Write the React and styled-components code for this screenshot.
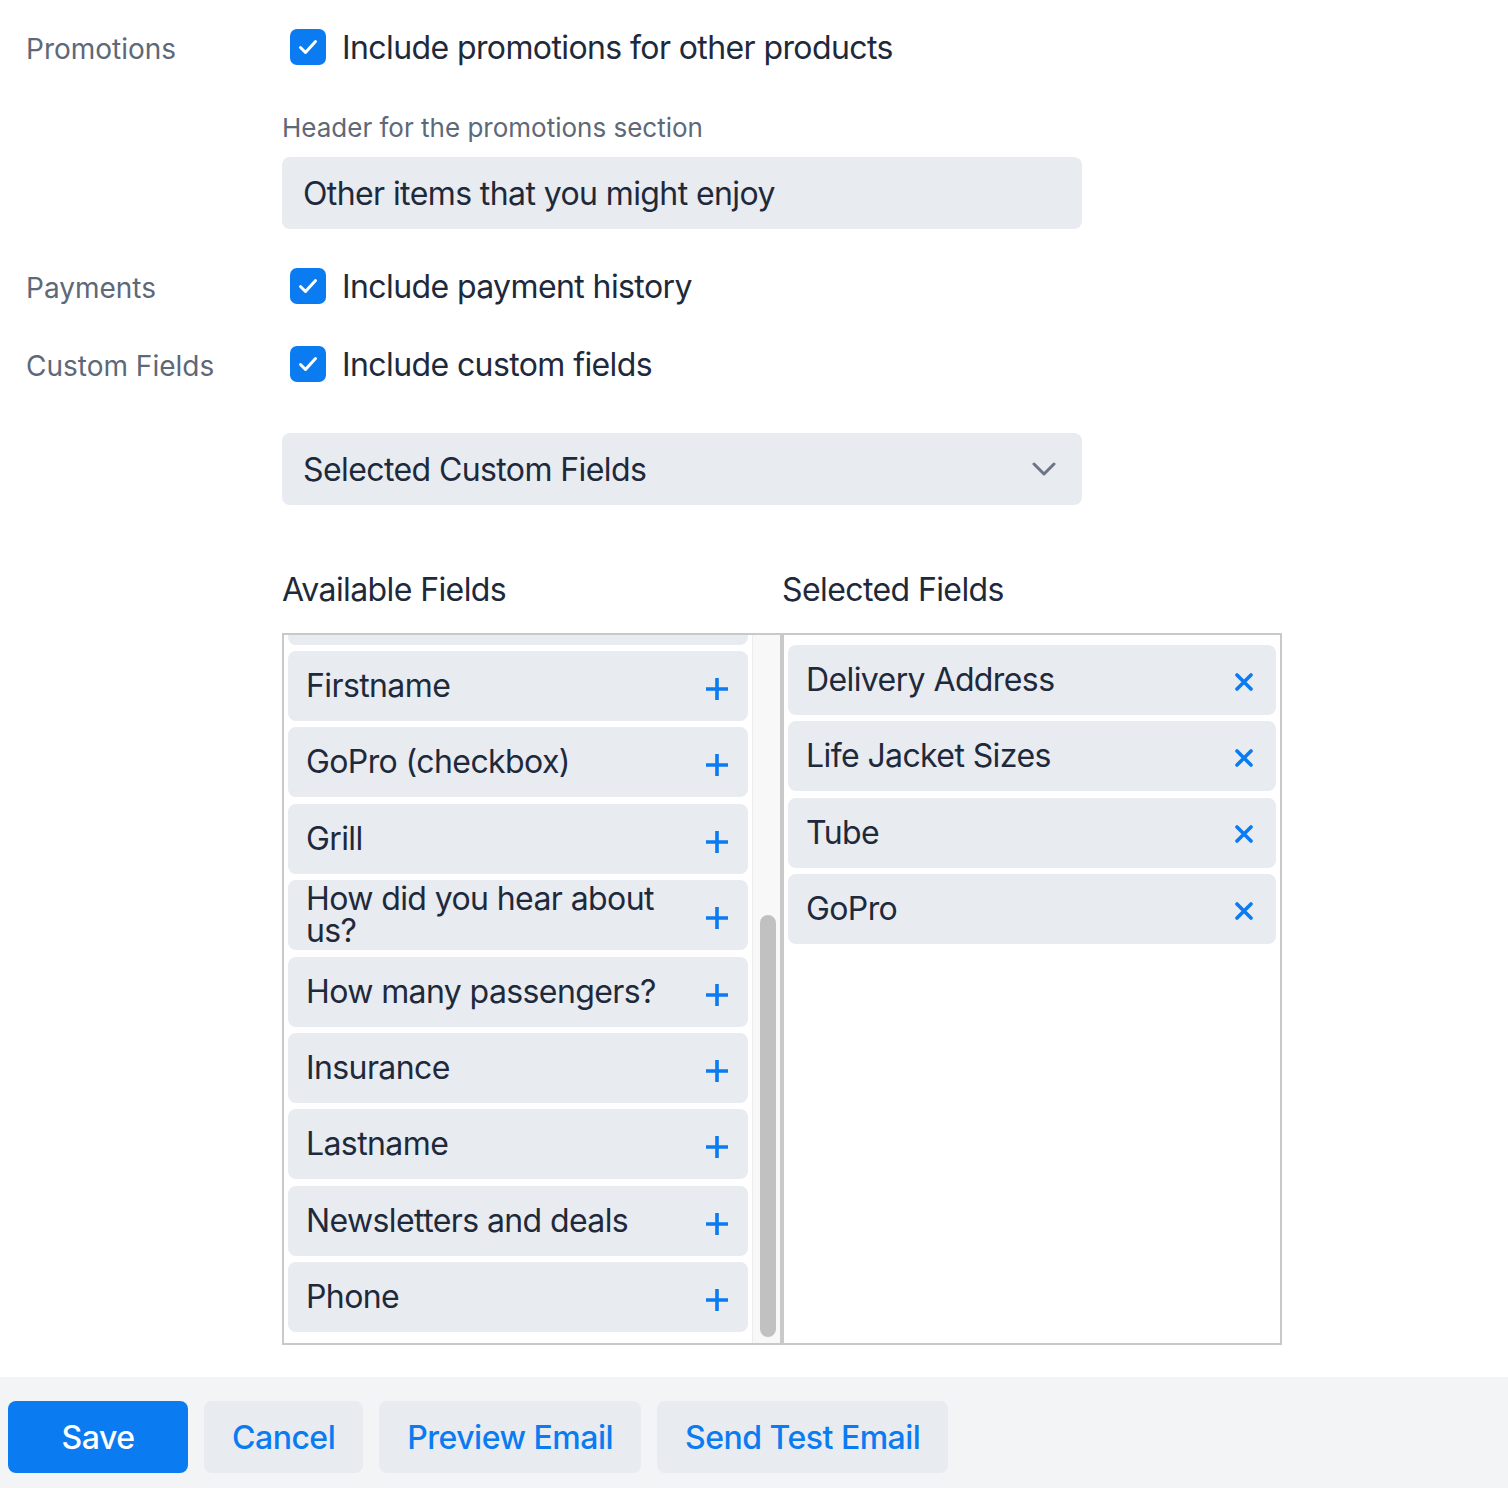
import React from "react";
import styled, { createGlobalStyle } from "styled-components";

const Global = createGlobalStyle`
  html, body { margin: 0; padding: 0; background: #ffffff; overflow: hidden; }
  body { font-family: Inter, "Noto Sans", "Liberation Sans", sans-serif; color: #1e2a3b; }
  * { box-sizing: border-box; }
`;

const BLUE = "#0b7bf1";
const FIELD_BG = "#e8ebf0";
const DARK = "#1e2a3b";
const GRAY = "#5d6878";
const TIGHT = "-0.6px";

const Page = styled.div`
  display: flex;
  flex-direction: column;
  min-height: 1488px;
`;

const Form = styled.div`
  display: grid;
  grid-template-columns: 282px 1000px;
  padding-top: 29px;
  flex: 1;
`;

const Label = styled.div`
  padding: 3px 0 0 26px;
  font-size: 28px;
  color: ${GRAY};
  height: 36px;
  display: flex;
  align-items: center;
  margin-top: ${(p) => p.$mt || 0}px;
`;

const Cell = styled.div`
  display: flex;
  flex-direction: column;
  margin-top: ${(p) => p.$mt || 0}px;
`;

const CheckRow = styled.label`
  display: flex;
  align-items: center;
  gap: 16px;
  height: 36px;
  padding-left: 8px;
  font-size: 32px;
  letter-spacing: ${TIGHT};
  color: ${DARK};
`;

const Box = styled.span`
  width: 36px;
  height: 36px;
  border-radius: 7px;
  background: ${BLUE};
  display: flex;
  align-items: center;
  justify-content: center;
  flex-shrink: 0;
`;

const SubLabel = styled.div`
  margin-top: 47px;
  font-size: 26px;
  line-height: 32px;
  color: ${GRAY};
`;

const TextInput = styled.div`
  margin-top: 13px;
  width: 800px;
  height: 72px;
  border-radius: 8px;
  background: ${FIELD_BG};
  display: flex;
  align-items: center;
  padding: 0 21px;
  font-size: 32px;
  letter-spacing: ${TIGHT};
  color: ${DARK};
`;

const Select = styled(TextInput)`
  margin-top: 51px;
  justify-content: space-between;
  padding-right: 26px;
`;

const Lists = styled.div`
  display: grid;
  grid-template-columns: 500px 500px;
  margin-top: 65px;
`;

const ListTitle = styled.div`
  font-size: 32px;
  line-height: 40px;
  letter-spacing: ${TIGHT};
  color: ${DARK};
  margin-bottom: 23px;
`;

const ListColumn = styled.div`
  display: flex;
  flex-direction: column;
`;

const ListBox = styled.div`
  height: 712px;
  border: 2px solid #c9c9c9;
  display: flex;
  background: #fff;
`;

const Viewport = styled.div`
  flex: 1;
  overflow: hidden;
  display: flex;
  flex-direction: column;
  justify-content: ${(p) => (p.$bottom ? "flex-end" : "flex-start")};
  gap: 6.375px;
  padding: 10px 4px 11px 4px;
`;

const Track = styled.div`
  width: 28px;
  background: #f8f8f8;
  border-left: 1px solid #ececec;
  display: flex;
  flex-direction: column;
  justify-content: flex-end;
  padding: 0 4px 6px 7px;
`;

const Thumb = styled.div`
  height: 422px;
  border-radius: 8px;
  background: #c1c1c1;
`;

const Item = styled.div`
  flex-shrink: 0;
  min-height: 70px;
  border-radius: 8px;
  background: ${FIELD_BG};
  display: flex;
  align-items: center;
  justify-content: space-between;
  gap: 16px;
  padding: 0 ${(p) => p.$pr}px 0 18px;
  font-size: 32px;
  line-height: 32px;
  letter-spacing: ${TIGHT};
  color: ${DARK};
`;

const ItemText = styled.span`
  flex: 1;
`;

const IconBtn = styled.span`
  display: flex;
  flex-shrink: 0;
  margin-top: ${(p) => p.$mt || 0}px;
`;

const Footer = styled.div`
  background: #f3f4f6;
  display: flex;
  gap: 16px;
  padding: 24px 8px 15px;
  margin-top: 32px;
`;

const Button = styled.button`
  height: 72px;
  min-width: ${(p) => (p.$primary ? 180 : 0)}px;
  padding: 0 28px;
  border: none;
  border-radius: 8px;
  background: ${(p) => (p.$primary ? BLUE : FIELD_BG)};
  color: ${(p) => (p.$primary ? "#ffffff" : BLUE)};
  font-family: inherit;
  font-size: 32px;
  font-weight: 500;
  letter-spacing: -0.5px;
`;

const Check = () => (
  <svg width="24" height="24" viewBox="0 0 24 24" fill="none">
    <path d="M4.5 12.5l5 5L19.5 6.5" stroke="#fff" strokeWidth="3" strokeLinecap="round" strokeLinejoin="round" />
  </svg>
);

const Plus = () => (
  <svg width="22" height="22" viewBox="0 0 22 22">
    <path d="M11 0v22M0 11h22" stroke={BLUE} strokeWidth="3.6" />
  </svg>
);

const Cross = () => (
  <svg width="18" height="18" viewBox="0 0 18 18">
    <path d="M2 2l14 14M16 2L2 16" stroke={BLUE} strokeWidth="3.6" strokeLinecap="round" />
  </svg>
);

const Chevron = () => (
  <svg width="24" height="14" viewBox="0 0 24 14" fill="none">
    <path d="M2 2l10 10L22 2" stroke="#6b7584" strokeWidth="3" strokeLinecap="round" strokeLinejoin="round" />
  </svg>
);

const available = [
  "Age",
  "Boat Size",
  "Company",
  "Dietary Requirements",
  "Email",
  "Emergency Contact",
  "Firstname",
  "GoPro (checkbox)",
  "Grill",
  "How did you hear about us?",
  "How many passengers?",
  "Insurance",
  "Lastname",
  "Newsletters and deals",
  "Phone",
];

const selected = ["Delivery Address", "Life Jacket Sizes", "Tube", "GoPro"];

const CheckField = ({ children }) => (
  <CheckRow>
    <Box>
      <Check />
    </Box>
    {children}
  </CheckRow>
);

export default function App() {
  return (
    <Page>
      <Global />
      <Form>
        <Label>Promotions</Label>
        <Cell>
          <CheckField>Include promotions for other products</CheckField>
          <SubLabel>Header for the promotions section</SubLabel>
          <TextInput>Other items that you might enjoy</TextInput>
        </Cell>

        <Label $mt={39}>Payments</Label>
        <Cell $mt={39}>
          <CheckField>Include payment history</CheckField>
        </Cell>

        <Label $mt={42}>Custom Fields</Label>
        <Cell $mt={42}>
          <CheckField>Include custom fields</CheckField>
          <Select>
            <span>Selected Custom Fields</span>
            <Chevron />
          </Select>
          <Lists>
            <ListColumn>
              <ListTitle>Available Fields</ListTitle>
              <ListBox>
                <Viewport $bottom>
                  {available.map((name) => (
                    <Item key={name} $pr={20}>
                      <ItemText>{name}</ItemText>
                      <IconBtn $mt={6}>
                        <Plus />
                      </IconBtn>
                    </Item>
                  ))}
                </Viewport>
                <Track>
                  <Thumb />
                </Track>
              </ListBox>
            </ListColumn>
            <ListColumn>
              <ListTitle>Selected Fields</ListTitle>
              <ListBox>
                <Viewport>
                  {selected.map((name) => (
                    <Item key={name} $pr={23}>
                      <ItemText>{name}</ItemText>
                      <IconBtn $mt={3}>
                        <Cross />
                      </IconBtn>
                    </Item>
                  ))}
                </Viewport>
              </ListBox>
            </ListColumn>
          </Lists>
        </Cell>
      </Form>
      <Footer>
        <Button $primary>Save</Button>
        <Button>Cancel</Button>
        <Button>Preview Email</Button>
        <Button>Send Test Email</Button>
      </Footer>
    </Page>
  );
}
